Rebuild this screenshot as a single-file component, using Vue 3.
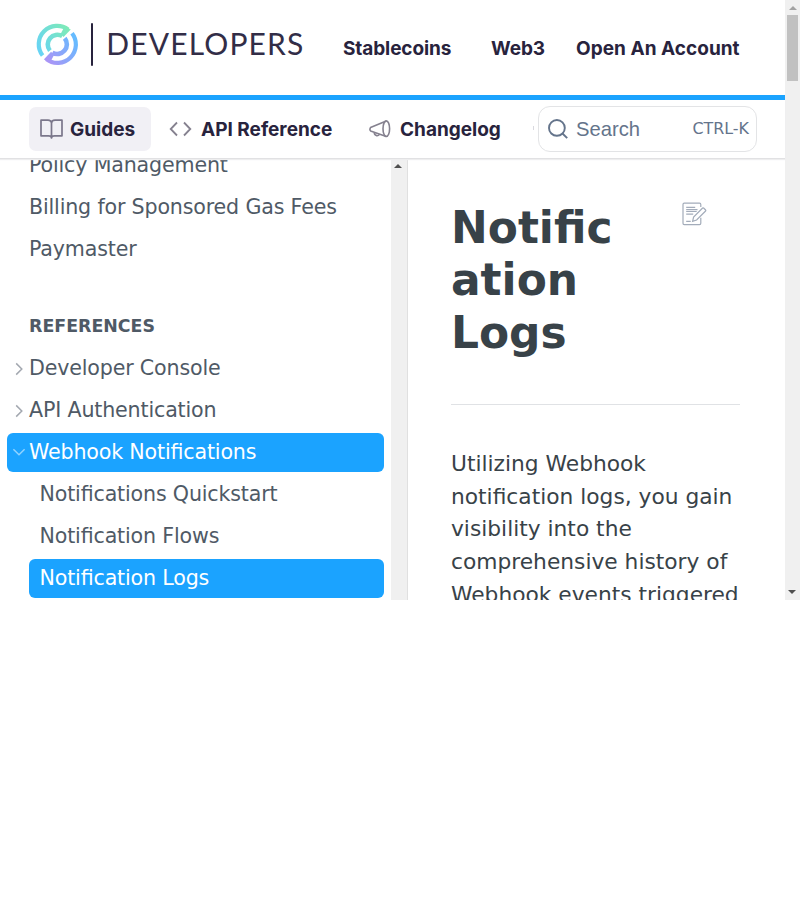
<script setup>
const primary = [
  { label: 'Stablecoins', name: 'stable' },
  { label: 'Web3', name: 'web3' },
  { label: 'Open An Account', name: 'account' },
]
const general = ['Policy Management', 'Billing for Sponsored Gas Fees', 'Paymaster']
const references = [
  { label: 'Developer Console', kind: 'closed' },
  { label: 'API Authentication', kind: 'closed' },
  { label: 'Webhook Notifications', kind: 'open' },
  { label: 'Notifications Quickstart', kind: 'child' },
  { label: 'Notification Flows', kind: 'child' },
  { label: 'Notification Logs', kind: 'child current' },
]
const body = ['Utilizing Webhook', 'notification logs, you gain', 'visibility into the', 'comprehensive history of', 'Webhook events triggered']
</script>

<template>
  <div class="shell">
    <div class="page">
      <header class="top">
        <div class="brand">
          <svg class="mark" viewBox="-21.300 -21.400 42 43" width="42" height="43" fill="none">
            <defs>
              <linearGradient id="g1" x1="-18" y1="6" x2="12" y2="-14" gradientUnits="userSpaceOnUse">
                <stop offset="0" stop-color="#68d4f4" /><stop offset="1" stop-color="#7deab8" />
              </linearGradient>
              <linearGradient id="g2" x1="-10" y1="15" x2="17" y2="-6" gradientUnits="userSpaceOnUse">
                <stop offset="0" stop-color="#a995f6" /><stop offset="1" stop-color="#66bbff" />
              </linearGradient>
            </defs>
            <g stroke="url(#g1)">
              <path stroke-width="4.200" d="M-14.700 11.100A18.400 18.400 0 0 1 11 -14.800" />
              <path stroke-width="4.600" d="M-7.400 6.200A9.700 9.700 0 0 1 5 -8.300" />
              <path fill="url(#g1)" stroke="none" d="M7 -17.500 13.500 -15 6.200 -7.400 3.300 -10.500Z" />
            </g>
            <g stroke="url(#g2)">
              <path stroke-width="4.200" d="M14.700 -11.100A18.400 18.400 0 0 1 -11 14.800" />
              <path stroke-width="4.600" d="M7.400 -6.200A9.700 9.700 0 0 1 -5 8.300" />
              <path fill="url(#g2)" stroke="none" d="M-7 17.500 -13.500 15 -6.200 7.400 -3.300 10.500Z" />
            </g>
          </svg>
          <span class="bar"></span>
          <span class="word">DEVELOPERS</span>
        </div>
        <nav class="primary">
          <a v-for="p in primary" :key="p.name" :class="p.name">{{ p.label }}</a>
        </nav>
      </header>

      <div class="subnav">
        <a class="tab active">
          <svg width="23" height="21" viewBox="0 0 23 21" fill="none" stroke="#7b778b" stroke-width="1.700" stroke-linejoin="round">
            <path d="M11.500 4.200C11.500 2.300 10 1.200 8 1.200H1v15.600h7.500c1.800 0 3 .7 3 2.200 0-1.500 1.200-2.200 3-2.200H22V1.200h-7c-2 0-3.500 1.100-3.500 3ZM11.500 4v15" />
          </svg>
          <span>Guides</span>
        </a>
        <a class="tab api">
          <svg width="23" height="16" viewBox="0 0 23 16" fill="none" stroke="#85818f" stroke-width="1.800">
            <path d="M8 1.500 1.700 8 8 14.500M15 1.500 21.300 8 15 14.500" />
          </svg>
          <span>API Reference</span>
        </a>
        <a class="tab change">
          <svg width="22" height="18" viewBox="0 0 22 18" fill="none" stroke="#85818f" stroke-width="1.600" stroke-linejoin="round">
            <ellipse cx="17.300" cy="8.700" rx="3.300" ry="7.800" />
            <path d="M17.300.9 1.500 7.600q-1.200 2.200.1 3.300l15.700 5.600M5.200 12.300c0 4 4.800 4.300 5 1.700" />
          </svg>
          <span>Changelog</span>
        </a>
        <span class="more"></span>
        <div class="search">
          <svg width="20" height="20" viewBox="0 0 20 20" fill="none" stroke="#64748b" stroke-width="1.900">
            <circle cx="8.900" cy="8.900" r="7.900" /><path d="m14.500 14.500 4.700 4.700" />
          </svg>
          <span class="find">Search</span>
          <kbd>CTRL-K</kbd>
        </div>
      </div>

      <div class="content">
        <aside>
          <a v-for="g in general" :key="g" class="row">{{ g }}</a>
          <h2>REFERENCES</h2>
          <a v-for="r in references" :key="r.label" class="row" :class="r.kind">
            <svg v-if="r.kind === 'closed'" class="chev" width="14" height="14" viewBox="0 0 14 14" fill="none"><path d="m4.200 1.400 5.600 5.600-5.600 5.600" /></svg>
            <svg v-if="r.kind === 'open'" class="chev" width="14" height="14" viewBox="0 0 14 14" fill="none"><path d="m1.400 4.200 5.600 5.600 5.600-5.600" /></svg>
            {{ r.label }}
          </a>
        </aside>
        <div class="track side"><i class="up dark"></i></div>
        <main>
          <div class="heading">
            <h1>Notific<br />ation<br />Logs</h1>
            <svg class="edit" width="25" height="24" viewBox="0 0 25 24" fill="none" stroke="#a3acba" stroke-width="1.200">
              <path d="M18.800 5V2.500Q18.800 1.200 17.500 1.200H2.200Q1 1.200 1 2.500v18.800q0 1.300 1.200 1.300h15.300q1.300 0 1.300-1.300v-5.500M4.200 5.300h9M4.200 7.600h11.300M4.200 9.500h10.500M4.200 12.200h7M4.200 19.300h4.500" />
              <path d="m10.600 19.300 1-4.300 9-9q.5-.4 1 0l2 2q.5.5 0 1l-9 9Z" />
            </svg>
          </div>
          <p><span v-for="line in body" :key="line">{{ line }}</span></p>
        </main>
      </div>
    </div>
    <div class="track outer">
      <i class="up"></i>
      <b></b>
      <i class="down"></i>
    </div>
  </div>
</template>

<style>
body { margin: 0; background: #fff; }
</style>

<style scoped>
* { box-sizing: border-box; }
.shell { display: flex; width: 800px; height: 600px; overflow: hidden; font-family: "DejaVu Sans", sans-serif; }
.page { width: 785px; height: 600px; display: flex; flex-direction: column; }
svg { display: block; flex: none; }
.top { height: 100px; border-bottom: 5px solid #1ba3ff; display: flex; flex: none; }
.brand { display: flex; width: 343px; padding: 23px 0 0 36px; flex: none; }
.bar { width: 2px; height: 43px; background: #28233d; margin-left: 13px; border-radius: 1px; }
.word { font: 400 30px/43px Lato, sans-serif; letter-spacing: 1.150px; color: #322d47; margin-left: 13.300px; margin-top: -1px; white-space: nowrap; }
.primary { display: flex; font: 700 19px/24px Inter, sans-serif; color: #28233d; padding-top: 37px; }
.primary a { white-space: nowrap; flex: none; letter-spacing: -.1px; }
.primary .account { letter-spacing: .03px; }
.stable { width: 148px; }
.web3 { width: 85px; }
.subnav { height: 59px; flex: none; display: flex; padding: 7px 0 0 29px; border-bottom: 1px solid #e1e1e3; box-shadow: 0 1px 1px #eeeeef; position: relative; background: #fff; z-index: 1; }
.tab { height: 44px; display: flex; align-items: center; font: 700 19px/24px Inter, sans-serif; color: #28233d; white-space: nowrap; flex: none; }
.tab span { padding-top: 2px; }
.active { background: #f1f0f5; width: 122px; padding-left: 11px; gap: 7px; border-radius: 7px; }
.api { width: 199px; padding-left: 18px; gap: 9px; }
.change { width: 182px; padding-left: 19px; gap: 9px; }
.more { width: 1px; height: 4px; background: #d9d9df; margin: 19px 4px 0 1px; flex: none; }
.search { width: 219px; height: 46px; margin-top: -1px; border: 1.250px solid #e3e4e6; border-radius: 12px; display: flex; align-items: center; padding: 0 7px 0 9px; color: #64748b; flex: none; }
.find { font: 20.200px/24px "Liberation Sans", sans-serif; margin: -1px auto 0 8px; }
kbd { font: 15.900px/20px "DejaVu Sans", sans-serif; }
.content { display: flex; height: 441px; overflow: hidden; }
aside { width: 391px; flex: none; padding: 0 7px; margin-top: -13px; }
.row { display: flex; align-items: center; height: 39px; margin-bottom: 3px; padding: 0 0 2px 22px; color: #4f5a66; font-size: 20.625px; letter-spacing: -.170px; font-feature-settings: "liga" 1; line-height: 30px; white-space: nowrap; border-radius: 6px; }
.closed, .open { padding-left: 5px; gap: 3px; }
.chev { stroke: #a3a8b0; stroke-width: 1.500; margin-top: 3px; }
.open .chev { margin-top: 1px; }
.open, .current { background: #1ba3ff; color: #fff; }
.open .chev { stroke: #91d3ff; }
.child { margin-left: 22px; padding-left: 10.500px; }
h2 { margin: 43px 0 9px 22px; height: 28px; font-size: 17.400px; line-height: 28px; color: #4f5a66; }
.track { background: #f0f0f0; flex: none; }
.track i { display: block; width: 0; height: 0; border: 4px solid transparent; }
.up { border-top: 0 !important; border-bottom-color: #a2a2a2 !important; margin: 6px auto 0; }
.side { width: 17px; border-right: 1px solid #e0e0e0; padding-right: 2px; }
.up.dark { border-bottom-color: #505050 !important; margin: 5px 0 0 3px; }
.outer { width: 15px; display: flex; flex-direction: column; }
.outer b { background: #c1c1c1; margin: 5px 2px 0; height: 66px; }
.down { border-bottom: 0 !important; border-top-color: #505050 !important; margin: auto auto 6px 3px; }
main { width: 377px; padding: 42px 45px 0 43px; color: #384248; }
.heading { height: 204px; display: flex; justify-content: space-between; border-bottom: 1px solid #e0e2e5; padding-right: 33px; }
h1 { margin: .5px 0 0; font-size: 43.900px; line-height: 52.500px; }
.edit { margin-top: 1px; }
p { margin: 43px 0 0; font-size: 21.750px; line-height: 32.700px; }
p span { display: block; white-space: nowrap; }
</style>
